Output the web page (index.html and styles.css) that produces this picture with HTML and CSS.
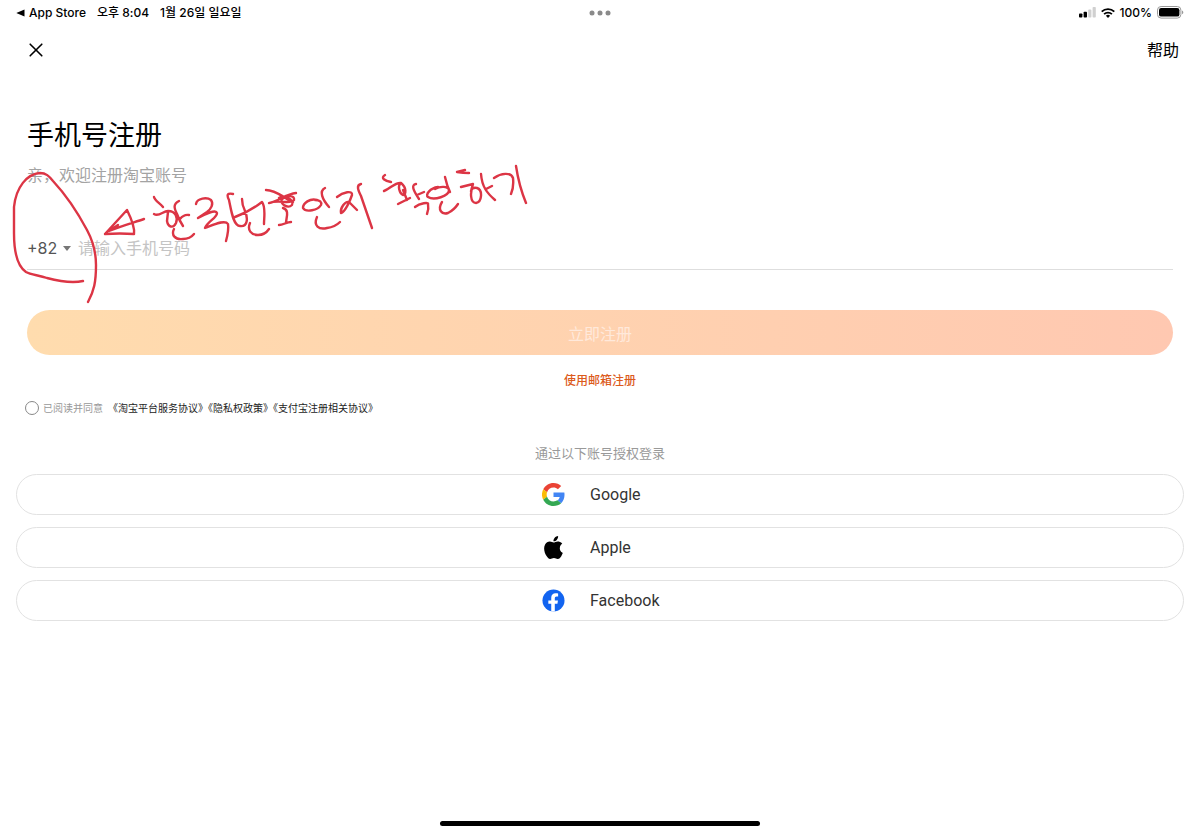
FILE: index.html
```html
<!DOCTYPE html>
<html lang="zh-CN">
<head>
<meta charset="utf-8">
<meta name="viewport" content="width=device-width, initial-scale=1">
<title>手机号注册</title>
<link rel="stylesheet" href="styles.css">
</head>
<body>
<div class="screen">
  <header class="status">
    <div class="status-left" lang="ko">
      <a class="back" href="#"><svg width="9" height="8" viewBox="0 0 9 8" aria-hidden="true"><path d="M8.5 .4v7.2L.3 4z"/></svg>App Store</a>
      <span>오후 8:04</span>
      <span>1월 26일 일요일</span>
    </div>
    <svg class="dots" width="22" height="6" viewBox="0 0 22 6" aria-hidden="true"><circle cx="3" cy="3" r="2.5"/><circle cx="11" cy="3" r="2.5"/><circle cx="19" cy="3" r="2.5"/></svg>
    <div class="status-right">
      <svg width="17" height="11" viewBox="0 0 17 11" aria-hidden="true"><rect x="0" y="6.5" width="3.4" height="4" rx=".8"/><rect x="4.6" y="4.7" width="3.4" height="5.8" rx=".8"/><g fill="#d0d0d0"><rect x="9.2" y="2.6" width="3.2" height="7.9" rx=".8"/><rect x="13.6" y="0" width="3.2" height="10.5" rx=".8"/></g></svg>
      <svg width="14" height="10" viewBox="0 0 14 10" aria-hidden="true"><g fill="none" stroke="#000" stroke-width="1.8"><path d="M.7 3.7a9 9 0 0 1 12.6 0"/><path d="M3.1 6.2a5.6 5.6 0 0 1 7.8 0"/></g><path d="M7 9.9 4.9 7.8a3 3 0 0 1 4.2 0z"/></svg>
      <span>100%</span>
      <svg width="27" height="13" viewBox="0 0 27 13" aria-hidden="true"><rect x=".5" y=".5" width="23.4" height="11.6" rx="3.6" fill="none" stroke="#999"/><rect x="2" y="2" width="20.4" height="8.6" rx="2.2"/><path d="M25 4.5v3.8c1.8-.6 1.8-3.2 0-3.8z" fill="#999"/></svg>
    </div>
  </header>

  <nav class="nav">
    <button class="close" type="button" aria-label="关闭"><svg width="14" height="14" viewBox="0 0 14 14" aria-hidden="true"><path d="m1.200 1.200 11.600 11.600M12.800 1.200 1.200 12.800" fill="none" stroke="#000" stroke-width="1.600" stroke-linecap="round"/></svg></button>
    <a class="help" href="#">帮助</a>
  </nav>

  <main>
    <form class="form">
      <h1>手机号注册</h1>
      <p class="welcome">亲，欢迎注册淘宝账号</p>
      <div class="phone">
        <div class="code">
          <select aria-label="国家或地区代码"><option>+82</option></select>
          <svg width="8" height="5" viewBox="0 0 8 5" aria-hidden="true"><path d="M0 0h8L4 5z" fill="#777"/></svg>
        </div>
        <input class="number" type="tel" aria-label="手机号码" placeholder="请输入手机号码">
      </div>
      <button class="submit" type="button">立即注册</button>
      <a class="email" href="#">使用邮箱注册</a>
    </form>
    <div class="terms">
      <input id="agree" type="checkbox">
      <p><label for="agree">已阅读并同意</label><a href="#">《淘宝平台服务协议》</a><a href="#">《隐私权政策》</a><a href="#">《支付宝注册相关协议》</a></p>
    </div>
    <section class="social">
      <h2>通过以下账号授权登录</h2>
      <button type="button"><svg width="23" height="23" viewBox="0 0 48 48" aria-hidden="true"><path fill="#EA4335" d="M24 9.500c3.500 0 6.700 1.200 9.200 3.600l6.900-6.900C35.900 2.400 30.500 0 24 0 14.600 0 6.500 5.400 2.600 13.200l8 6.200C12.400 13.700 17.700 9.500 24 9.500z"/><path fill="#4285F4" d="M47 24.500c0-1.600-.2-3.100-.4-4.500H24v9h12.900c-.6 3-2.200 5.500-4.700 7.200l7.700 6C44.400 38 47 31.800 47 24.500z"/><path fill="#FBBC05" d="M10.500 28.600A14.500 14.500 0 0 1 10.500 19.400l-7.900-6.200a24 24 0 0 0 0 21.600z"/><path fill="#34A853" d="M24 48c6.500 0 11.900-2.100 15.900-5.800l-7.700-6C30 37.700 27.200 38.500 24 38.500c-6.300 0-11.600-4.200-13.500-9.900l-7.900 6.200C6.500 42.600 14.600 48 24 48z"/></svg><span>Google</span></button>
      <button type="button"><svg width="23" height="23" viewBox="0 0 24 24" aria-hidden="true"><path d="M12.150 6.900c-.95 0-2.410-1.080-3.960-1.040-2.040.03-3.910 1.180-4.960 3.010-2.120 3.680-.55 9.100 1.520 12.090 1.010 1.450 2.210 3.090 3.790 3.040 1.520-.07 2.090-.99 3.940-.99 1.830 0 2.350.99 3.960.95 1.640-.03 2.680-1.480 3.680-2.950 1.160-1.690 1.640-3.330 1.660-3.410-.04-.01-3.180-1.220-3.220-4.860-.03-3.040 2.480-4.490 2.600-4.560-1.430-2.090-3.620-2.320-4.390-2.380-2-.15-3.680 1.100-4.620 1.100zM15.530 3.830c.84-1.010 1.400-2.430 1.250-3.830-1.210.05-2.660.81-3.530 1.820-.78.9-1.450 2.340-1.270 3.710 1.340.1 2.710-.69 3.550-1.700z"/></svg><span>Apple</span></button>
      <button type="button"><svg width="23" height="23" viewBox="0 0 24 24" aria-hidden="true"><circle cx="12" cy="12" r="11.500" fill="#1264f0"/><path fill="#fff" d="m16.100 15.400.55-3.500h-3.300V9.600c0-.95.470-1.880 1.960-1.880h1.500V4.750s-1.370-.23-2.670-.23c-2.730 0-4.500 1.650-4.500 4.640v2.740H6.600v3.500h3.040v8c1.240.2 2.480.2 3.710 0v-8z"/></svg><span>Facebook</span></button>
    </section>
  </main>
  <div class="home"></div>

  <svg class="ink" width="540" height="310" viewBox="0 0 540 310" role="img" aria-label="한국번호인지 확인하기">
    <path d="M83 281C74 283 62 282 47 278C39 275 31 275 26 272C17 266 14 249 14 233V207C16 187 27 174 40 173C46 173 49 176 53 181C66 195 79 215 87 230C94 243 96 253 96 265C96 282 94 291 88 302"/>
    <path d="M105 234 127 210C131 218 135 227 134 234Q120 233 105 234M144 219C132 223 121 226 109 231M118 225 109 231"/>
    <path d="M154 197C155 201 160 203 163 207M154 214C159 217 163 211 168 211C176 211 178 218 176 223C173 229 168 227 167 221L168 212M179 201C173 204 174 208 177 214Q179 220 183 226M180 219Q184 214 189 215M174 229C171 235 175 240 183 239Q190 239 194 234"/>
    <path d="M196 204C197 198 207 197 211 200C214 204 211 209 207 212L198 218C205 214 216 209 217 213C217 218 208 221 205 228C213 225 225 219 228 224Q229 230 226 241"/>
    <path d="M233 194C228 193 226 194 229 200C231 209 233 226 240 226C248 227 248 218 245 211Q242 205 242 199M235 217Q249 212 262 202C266 207 264 217 264 224M250 223C247 230 251 235 258 235Q265 235 269 229"/>
    <path d="M266 190C276 190 284 198 293 202M296 193C286 194 277 202 269 203C279 199 290 205 294 200C295 195 287 195 282 199C279 204 288 209 292 205C295 200 284 194 279 198M283 208C290 210 286 218 286 223M279 225C283 225 287 222 291 222"/>
    <path d="M317 200C310 198 303 203 303 208C306 213 318 210 321 205C322 202 320 200 315 200M325 188C319 191 322 199 329 207M317 217C313 226 319 230 327 228Q335 227 340 222"/>
    <path d="M337 197C343 192 353 190 352 195C350 201 345 212 341 213C340 208 345 201 349 202L357 210M361 184C356 185 358 190 361 196L372 228"/>
    <path d="M385 175C380 178 385 181 391 182M384 191C390 189 395 182 401 183C407 188 406 194 403 195C399 193 398 186 400 184M403 190 407 200M398 204 410 198M416 184C411 185 413 190 419 199M417 195 424 192M415 207C420 203 429 202 428 204Q429 209 427 214"/>
    <path d="M438 187C430 188 425 195 428 197C434 201 449 196 449 190C448 186 440 186 435 189M445 177Q447 186 450 192M442 202C437 210 442 215 448 213Q454 210 458 204"/>
    <path d="M469 173Q463 173 457 172L465 170M461 187Q469 185 473 184C470 192 470 203 476 203C482 202 483 190 477 188Q472 187 471 191M481 174C482 187 487 193 495 200M486 189 492 186M494 178C501 173 511 172 513 178Q514 187 511 194M516 166Q519 186 526 203"/>
  </svg>
</div>
</body>
</html>
```
FILE: styles.css
```css
* { box-sizing: border-box; }
body {
  margin: 0;
  background: #fff;
  color: #000;
  font-family: Inter, "Noto Sans CJK SC", sans-serif;
}
button, input, select { font: inherit; }
button { cursor: pointer; }
a { color: inherit; text-decoration: none; }
h1, h2, p { margin: 0; font-weight: 400; }
svg { display: block; flex: none; }

.screen {
  position: relative;
  display: flex;
  flex-direction: column;
  min-height: 100vh;
}
.status {
  display: grid;
  grid-template-columns: 1fr auto 1fr;
  align-items: center;
  height: 25px;
  padding: 0 16px;
  font-size: 12px;
  font-weight: 500;
  line-height: 24px;
}
.status-left {
  display: flex;
  gap: 11px;
  font-family: Inter, "Noto Sans CJK KR", sans-serif;
}
.back { display: flex; align-items: center; gap: 4px; }
.dots { fill: #8a8a8a; }
.status-right {
  display: flex;
  justify-content: flex-end;
  align-items: center;
  gap: 5px;
}
.nav {
  display: flex;
  align-items: center;
  justify-content: space-between;
  height: 50px;
  padding: 0 21px;
}
.close {
  padding: 8px;
  border: 0;
  background: none;
}
.help { font-size: 16px; line-height: 24px; }

.form {
  display: flex;
  flex-direction: column;
  padding: 41px 27px 0;
}
h1 {
  font-size: 27px;
  line-height: 40px;
}
.welcome {
  margin-top: 7px;
  color: #a3a3a3;
  font-size: 16px;
  line-height: 24px;
}
.phone {
  display: flex;
  align-items: center;
  height: 43px;
  margin-top: 40px;
  border-bottom: 1px solid #dedede;
}
.code { position: relative; display: flex; align-items: center; }
.code svg { position: absolute; right: 0; pointer-events: none; }
.code select {
  width: 44px;
  padding: 0;
  border: 0;
  background: none;
  color: #555;
  font-size: 16px;
  appearance: none;
}
.number {
  flex: 1;
  min-width: 0;
  padding: 0;
  margin-left: 7px;
  border: 0;
  background: none;
  font-size: 16px;
}
.number::placeholder { color: #c4c4c4; opacity: 1; }
.submit {
  height: 45px;
  margin-top: 40px;
  padding: 0;
  border: 0;
  border-radius: 24px;
  background: linear-gradient(90deg, #ffdcae, #ffc8b1);
  color: #ffe9db;
  font-size: 16px;
}
.email {
  align-self: center;
  margin-top: 16px;
  color: #dc5b1c;
  font-size: 12px;
  font-weight: 500;
  line-height: 20px;
}
.terms {
  display: flex;
  align-items: center;
  gap: 4px;
  margin-top: 8px;
  padding: 0 25px;
  color: #222;
  font-size: 10px;
  line-height: 18px;
}
.terms label { margin-right: 5px; color: #999; }
.terms input {
  width: 14px;
  height: 14px;
  margin: 0;
  border: 1px solid #888;
  border-radius: 50%;
  appearance: none;
}
.terms input:checked { background: #ff6200; }
.social {
  display: flex;
  flex-direction: column;
  gap: 12px;
  margin-top: 27px;
  padding: 0 16px;
}
.social h2 {
  color: #999;
  font-size: 13px;
  line-height: 18px;
  text-align: center;
}
.social button {
  display: grid;
  grid-template-columns: 1fr 1fr;
  align-items: center;
  column-gap: 25px;
  height: 41px;
  padding: 0 45px 0 0;
  border: 1px solid #e2e2e2;
  border-radius: 24px;
  background: #fff;
  color: #333;
  font-family: Roboto, sans-serif;
  font-size: 16px;
  text-align: left;
}
.social svg { justify-self: end; }
.home {
  width: 320px;
  max-width: 60%;
  height: 5px;
  margin: auto auto 8px;
  border-radius: 4px;
  background: #000;
}
.ink {
  position: absolute;
  top: 0;
  left: 0;
  fill: none;
  stroke: #dc3545;
  stroke-width: 2.4;
  stroke-linecap: round;
  stroke-linejoin: round;
  pointer-events: none;
}
```
